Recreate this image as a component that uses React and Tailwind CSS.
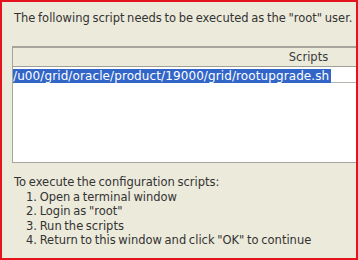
export default function App() {
  const steps = [
    "1. Open a terminal window",
    '2. Login as "root"',
    "3. Run the scripts",
    '4. Return to this window and click "OK" to continue',
  ];

  return (
    <div
      className="w-[358px] h-[260px] border-2 border-[#e5141c] bg-[#eceadb] overflow-hidden text-[#333333] text-[11.5px] [word-spacing:-1px]"
      style={{ fontFamily: '"DejaVu Sans", "Liberation Sans", sans-serif' }}
    >
      <div className="pl-[10px] pt-[8px]">
        <p className="ml-[2px] leading-[16px] whitespace-nowrap">
          The following script needs to be executed as the "root" user.
        </p>

        {/* Scripts table */}
        <div className="mt-[20px] w-[592px] border-t-2 border-l border-b border-[#a5a59b] bg-white">
          <div className="h-[19px] bg-[#eceadb] border-b border-[#9f9f95] text-center leading-[19px] text-[#3a3a3a]">
            Scripts
          </div>
          <div className="h-[16px] border-b border-[#b5b5ad] pt-[1px]">
            <span className="inline-block bg-[#3265c8] text-white text-[12px] tracking-[0.1px] leading-[14px] h-[14px] pr-[2px]">
              /u00/grid/oracle/product/19000/grid/rootupgrade.sh
            </span>
          </div>
          <div className="h-[79px]" />
        </div>

        <div className="mt-[12px] ml-[2px] leading-[14.5px] whitespace-nowrap">
          <p>To execute the configuration scripts:</p>
          <ul className="pl-[12px]">
            {steps.map((s) => (
              <li key={s}>{s}</li>
            ))}
          </ul>
        </div>
      </div>
    </div>
  );
}
